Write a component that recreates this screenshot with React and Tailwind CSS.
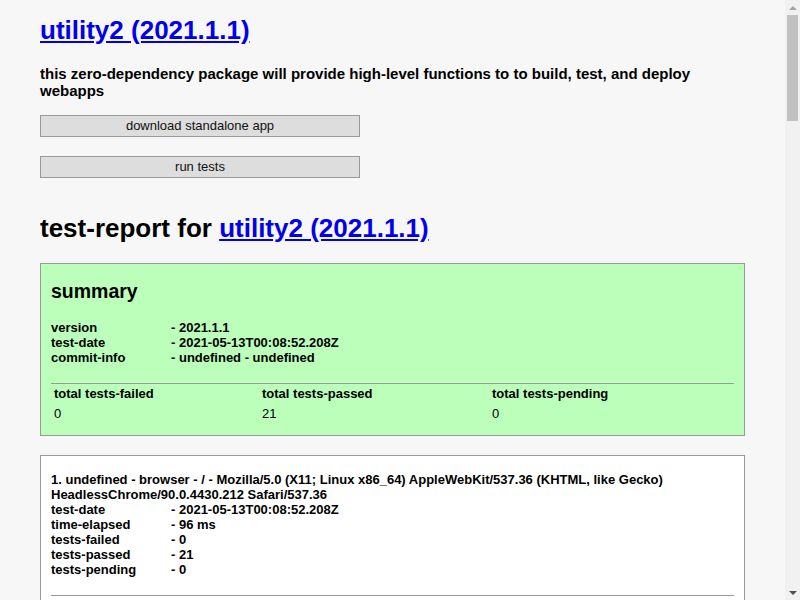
import React from "react";

const summaryRows = [
  ["version", "- 2021.1.1"],
  ["test-date", "- 2021-05-13T00:08:52.208Z"],
  ["commit-info", "- undefined - undefined"],
];

const platformRows = [
  ["test-date", "- 2021-05-13T00:08:52.208Z"],
  ["time-elapsed", "- 96 ms"],
  ["tests-failed", "- 0"],
  ["tests-passed", "- 21"],
  ["tests-pending", "- 0"],
];

const testCases = [
  "testCase_ajax_default",
  "testCase_assertJsonEqual_default",
  "testCase_assertOrThrow_default",
  "testCase_base64FromBuffer_default",
  "testCase_blobRead_default",
  "testCase_browserTest_default",
  "testCase_bufferValidateAndCoerce_default",
  "testCase_cliRun_default",
  "testCase_coverageReportCreate_default",
  "testCase_domElementRender_default",
  "testCase_eventEmitter_default",
  "testCase_fsRmrfSync_default",
  "testCase_jsonStringifyOrdered_default",
  "testCase_moduleDirname_default",
  "testCase_objectDeepCopyWithKeysSorted_default",
  "testCase_onErrorThrow_default",
  "testCase_onParallel_default",
  "testCase_requireReadme_default",
  "testCase_serverRespondDefault_default",
  "testCase_stringHtmlSafe_default",
  "testCase_uuid4Create_default",
];

const KeyTable = ({ rows }) => (
  <div className="grid grid-cols-[120px_1fr] text-[13px] leading-[15px] font-bold">
    {rows.map(([k, v]) => (
      <React.Fragment key={k}>
        <div>{k}</div>
        <div>{v}</div>
      </React.Fragment>
    ))}
  </div>
);

// fake browser scrollbar, the reference is scrolled to the top of a long page
const Scrollbar = () => (
  <div className="w-[15px] h-full bg-[#f1f1f1] flex flex-col items-center shrink-0">
    <div className="h-[15px] flex items-center justify-center">
      <div className="w-0 h-0 border-l-[4px] border-r-[4px] border-b-[4px] border-l-transparent border-r-transparent border-b-[#a3a3a3]" />
    </div>
    <div className="w-[11px] h-[106px] bg-[#c1c1c1]" />
    <div className="flex-1" />
    <div className="h-[15px] flex items-center justify-center">
      <div className="w-0 h-0 border-l-[4px] border-r-[4px] border-t-[4px] border-l-transparent border-r-transparent border-t-[#505050]" />
    </div>
  </div>
);

export default function App() {
  return (
    <div className="flex h-screen w-full overflow-hidden bg-[#f7f7f7]">
      <div
        className="w-[785px] shrink-0 h-full overflow-hidden text-black px-[40px] pb-[40px]"
        style={{ fontFamily: '"Liberation Sans", Arial, sans-serif' }}
      >
        <h1 className="pt-[15px] text-[26px] leading-[30px] font-bold">
          <a href="#" className="text-[#0000ee] underline">utility2 (2021.1.1)</a>
        </h1>
        <h3 className="mt-[20px] text-[15px] leading-[17px] font-bold">
          this zero-dependency package will provide high-level functions to to build, test, and deploy webapps
        </h3>

        <button className="mt-[16px] block w-[320px] h-[22px] bg-[#dddddd] border border-[#999999] text-[13px] text-[#111]">
          download standalone app
        </button>
        <button className="mt-[19px] block w-[320px] h-[22px] bg-[#dddddd] border border-[#999999] text-[13px] text-[#111]">
          run tests
        </button>

        <h2 className="mt-[35px] text-[26px] leading-[30px] font-bold">
          test-report for{" "}
          <a href="#" className="text-[#0000ee] underline">utility2 (2021.1.1)</a>
        </h2>

        <div className="mt-[20px] bg-[#bbffbb] border border-[#999999] px-[10px] pt-[10px] pb-[13px]">
          <h4 className="mt-[6px] text-[19.5px] leading-[22px] font-bold">summary</h4>
          <div className="mt-[18px]">
            <KeyTable rows={summaryRows} />
          </div>
          <div className="mt-[18px] border-t border-[#999999]" />
          <div className="grid grid-cols-[208px_230px_1fr] text-[13px] leading-[15px]">
            <div className="px-[3px] py-[2px] font-bold">total tests-failed</div>
            <div className="px-[3px] py-[2px] font-bold">total tests-passed</div>
            <div className="px-[3px] py-[2px] font-bold">total tests-pending</div>
            <div className="px-[3px] pt-[3px] pb-[1px]">0</div>
            <div className="px-[3px] pt-[3px] pb-[1px]">21</div>
            <div className="px-[3px] pt-[3px] pb-[1px]">0</div>
          </div>
        </div>

        <div className="mt-[19px] bg-white border border-[#999999] px-[10px] pt-[10px] pb-[10px]">
          <h4 className="mt-[6px] text-[13px] leading-[15px] font-bold">
            1. undefined - browser - / - Mozilla/5.0 (X11; Linux x86_64) AppleWebKit/537.36 (KHTML, like Gecko) HeadlessChrome/90.0.4430.212 Safari/537.36
          </h4>
          <KeyTable rows={platformRows} />
          <div className="mt-[18px] border-t border-[#999999]" />
          <div className="grid grid-cols-[1fr_160px_120px] text-[13px] leading-[15px]">
            <div className="px-[3px] py-[2px] font-bold">test-case</div>
            <div className="px-[3px] py-[2px] font-bold">time-elapsed</div>
            <div className="px-[3px] py-[2px] font-bold">status</div>
            {testCases.map((name, i) => (
              <React.Fragment key={name}>
                <div className="px-[3px] py-[2px]">{i + 1}. {name}</div>
                <div className="px-[3px] py-[2px]">{(i * 7) % 40 + 1} ms</div>
                <div className="px-[3px] py-[2px]">passed</div>
              </React.Fragment>
            ))}
          </div>
        </div>
      </div>
      <Scrollbar />
    </div>
  );
}
